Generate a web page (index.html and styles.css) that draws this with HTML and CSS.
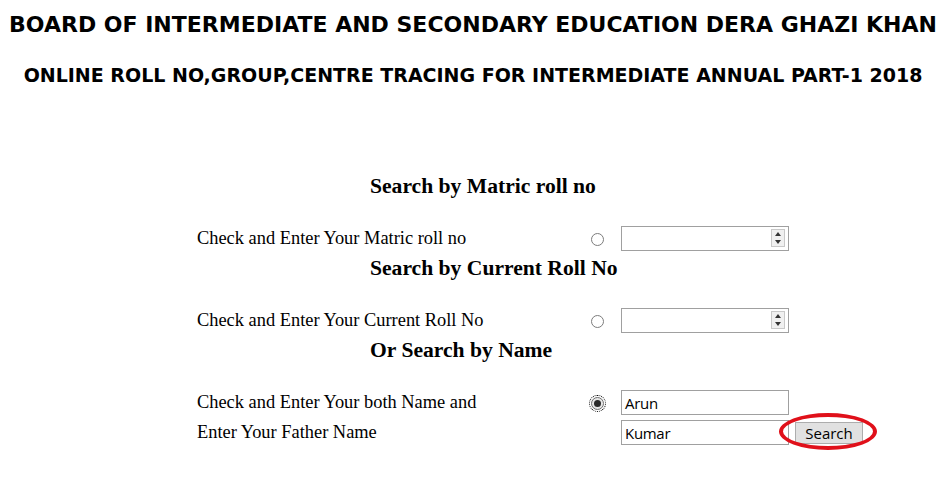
FILE: index.html
```html
<!DOCTYPE html>
<html>
<head>
<meta charset="utf-8">
<link rel="stylesheet" href="styles.css">
</head>
<body>
<header class="top">
  <h1 class="title">BOARD OF INTERMEDIATE AND SECONDARY EDUCATION DERA GHAZI KHAN</h1>
  <h2 class="subtitle">ONLINE ROLL NO,GROUP,CENTRE TRACING FOR INTERMEDIATE ANNUAL PART-1 2018</h2>
</header>
<main class="form">
  <h3 class="sec sec-first">Search by Matric roll no</h3>
  <div class="row">
    <span class="label">Check and Enter Your Matric roll no</span>
    <span class="radio"></span>
    <span class="num"><span class="spin"><i class="up"></i><i class="down"></i></span></span>
  </div>
  <h3 class="sec">Search by Current Roll No</h3>
  <div class="row">
    <span class="label">Check and Enter Your Current Roll No</span>
    <span class="radio"></span>
    <span class="num"><span class="spin"><i class="up"></i><i class="down"></i></span></span>
  </div>
  <h3 class="sec">Or Search by Name</h3>
  <div class="row">
    <span class="label">Check and Enter Your both Name and</span>
    <span class="radio checked"><span class="dot"></span></span>
    <span class="text">Arun</span>
  </div>
  <div class="row row-last">
    <span class="label">Enter Your Father Name</span>
    <span class="radio-space"></span>
    <span class="text">Kumar</span>
    <span class="btn-wrap"><span class="btn">Search</span><span class="ring"></span></span>
  </div>
</main>
</body>
</html>
```
FILE: styles.css
```css
html, body {
  margin: 0;
  padding: 0;
  background: #fff;
  color: #000;
}
body {
  width: 946px;
  height: 482px;
  overflow: hidden;
  font-family: "Liberation Serif", "Times New Roman", serif;
}
.top {
  display: flex;
  flex-direction: column;
  align-items: center;
}
.title {
  margin: 12px 0 0;
  font-family: "DejaVu Sans", Verdana, sans-serif;
  font-weight: bold;
  font-size: 22px;
  line-height: 26px;
  white-space: nowrap;
  text-align: center;
}
.subtitle {
  margin: 25px 0 0;
  font-family: "DejaVu Sans", Verdana, sans-serif;
  font-weight: bold;
  font-size: 19px;
  line-height: 24px;
  white-space: nowrap;
  text-align: center;
}
.form {
  width: 720px;
  margin: 0 0 0 197px;
  display: flex;
  flex-direction: column;
}
.sec {
  margin: 5px 0 0;
  padding-left: 173px;
  font-size: 21.6px;
  line-height: 24px;
  font-weight: bold;
  white-space: nowrap;
}
.sec-first {
  margin-top: 87px;
}
.row {
  display: flex;
  align-items: center;
  height: 26px;
  margin-top: 27px;
}
.row-last {
  margin-top: 4px;
}
.label {
  flex: 0 0 394px;
  font-size: 18.4px;
  white-space: nowrap;
}
.radio, .radio-space {
  flex: 0 0 13px;
  width: 13px;
  height: 13px;
  box-sizing: border-box;
  margin-right: 17px;
  margin-top: 2px;
}
.radio {
  border: 1px solid #7c7c7c;
  border-radius: 50%;
  display: flex;
  align-items: center;
  justify-content: center;
}
.radio.checked {
  border-color: #6f6f6f;
  background: #e6e6e6;
  outline: 1px dotted #000;
  outline-offset: 1px;
}
.dot {
  width: 7px;
  height: 7px;
  border-radius: 50%;
  background: #2a2a2a;
}
.num, .text {
  flex: 0 0 168px;
  width: 168px;
  height: 25px;
  box-sizing: border-box;
  border: 1px solid #a0a0a0;
  display: flex;
  align-items: center;
  justify-content: flex-end;
  padding-right: 3px;
}
.spin {
  width: 14px;
  height: 18px;
  box-sizing: border-box;
  border: 1px solid #c8c8c8;
  background: #f0f0f0;
  display: flex;
  flex-direction: column;
  align-items: center;
  justify-content: space-around;
}
.spin .up {
  width: 0; height: 0;
  border-left: 3px solid transparent;
  border-right: 3px solid transparent;
  border-bottom: 4px solid #333;
}
.spin .down {
  width: 0; height: 0;
  border-left: 3px solid transparent;
  border-right: 3px solid transparent;
  border-top: 4px solid #333;
}
.text {
  justify-content: flex-start;
  padding: 1px 3px 0;
  font-family: "Open Sans", "Noto Sans", sans-serif;
  font-size: 15px;
  letter-spacing: -0.3px;
  color: #000;
}
.btn-wrap {
  position: relative;
  margin-left: 6px;
  display: flex;
  margin-top: 1px;
}
.btn {
  width: 68px;
  height: 22px;
  box-sizing: border-box;
  border: 1px solid #adadad;
  background: #e1e1e1;
  font-family: "Open Sans", "Noto Sans", sans-serif;
  font-size: 15px;
  display: flex;
  align-items: center;
  justify-content: center;
}
.ring {
  position: absolute;
  left: -16px;
  top: -9px;
  width: 98px;
  height: 37px;
  box-sizing: border-box;
  border: 4px solid #e0101a;
  border-radius: 50%;
}
```
